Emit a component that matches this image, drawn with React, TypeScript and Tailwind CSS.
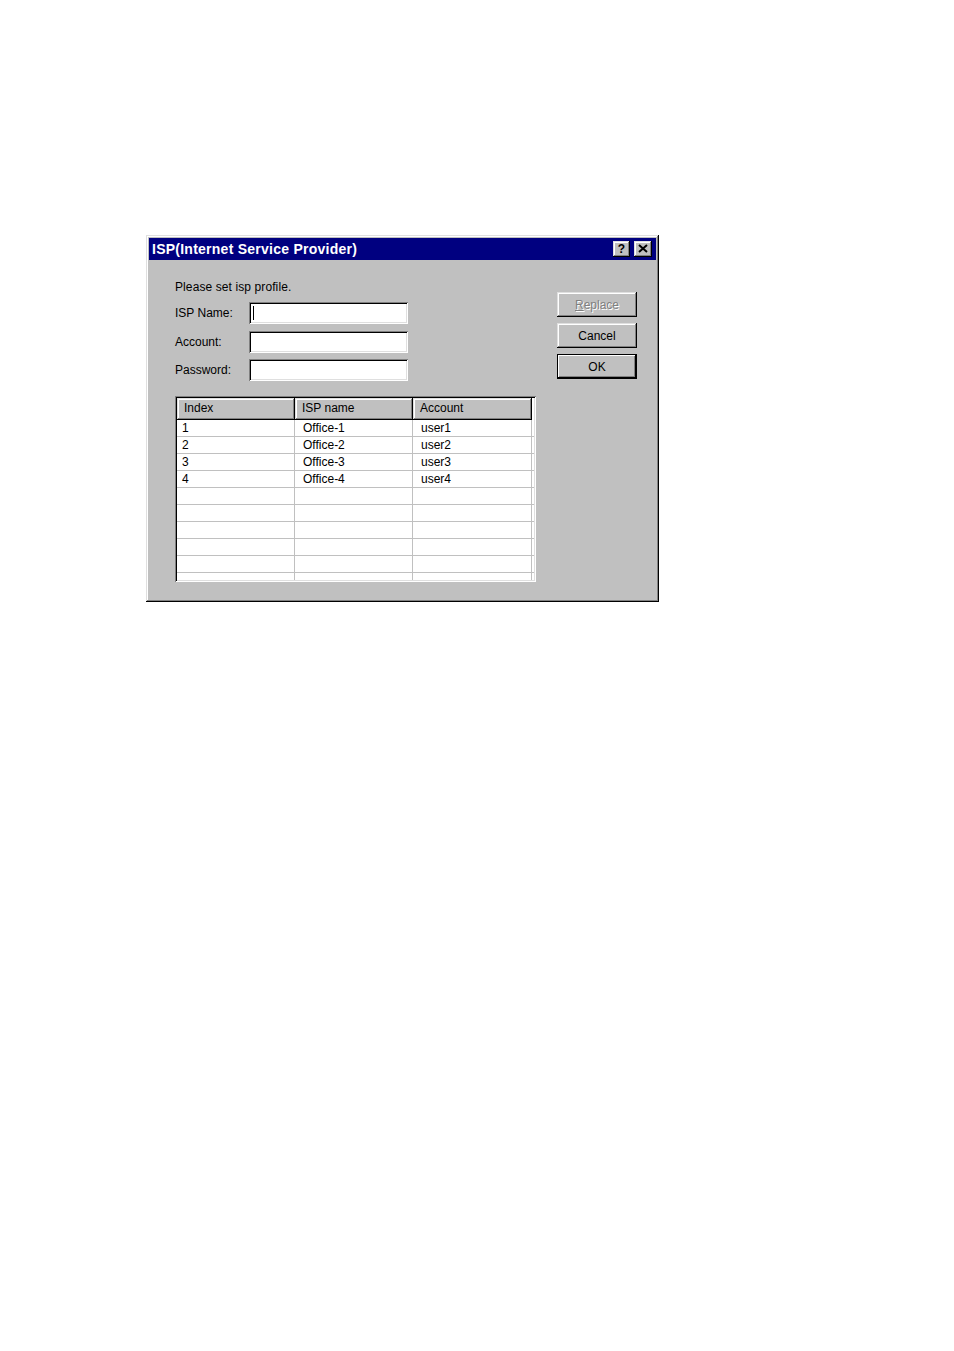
import React from "react";

const raised =
  "shadow-[inset_-1px_-1px_#000000,inset_1px_1px_#dfdfdf,inset_-2px_-2px_#808080,inset_2px_2px_#ffffff]";
const sunken =
  "shadow-[inset_1px_1px_#808080,inset_-1px_-1px_#ffffff,inset_2px_2px_#000000,inset_-2px_-2px_#dfdfdf]";

const rows = [
  ["1", "Office-1", "user1"],
  ["2", "Office-2", "user2"],
  ["3", "Office-3", "user3"],
  ["4", "Office-4", "user4"],
  ["", "", ""],
  ["", "", ""],
  ["", "", ""],
  ["", "", ""],
  ["", "", ""],
  ["", "", ""],
];

function Field({ label, cursor }: { label: string; cursor?: boolean }) {
  return (
    <div className="flex items-center h-[22px]">
      <div className="w-[74px] text-[12px] leading-[14px] text-black">{label}</div>
      <div className={`w-[159px] h-[22px] bg-white ${sunken} flex items-center pl-[4px]`}>
        {cursor && <div className="w-px h-[14px] bg-black" />}
      </div>
    </div>
  );
}

function Btn({ children, def, disabled }: { children: React.ReactNode; def?: boolean; disabled?: boolean }) {
  if (def) {
    return (
      <div className="w-[80px] h-[25px] border border-black">
        <div className="w-full h-full bg-[#c0c0c0] flex items-center justify-center text-[12px] leading-[14px] text-black shadow-[inset_-1px_-1px_#000000,inset_1px_1px_#ffffff,inset_-2px_-2px_#808080]">
          {children}
        </div>
      </div>
    );
  }
  return (
    <div
      className={`w-[80px] h-[25px] bg-[#c0c0c0] ${raised} flex items-center justify-center text-[12px] leading-[14px] ${
        disabled ? "text-[#808080] [text-shadow:1px_1px_0_#ffffff]" : "text-black"
      }`}
    >
      {children}
    </div>
  );
}

export default function App() {
  return (
    <div
      className="min-h-screen bg-white pt-[235px] pl-[146px]"
      style={{ fontFamily: '"Liberation Sans", Arial, sans-serif' }}
    >
      <div className={`w-[513px] h-[367px] bg-[#c0c0c0] p-[3px] ${raised}`}>
        {/* Title bar */}
        <div className="h-[22px] bg-[#000080] flex items-center justify-between pl-[3px] pr-[4px]">
          <span className="text-white font-bold text-[14px] leading-[16px] tracking-[0.25px]">
            ISP(Internet Service Provider)
          </span>
          <div className="flex items-center gap-[4px]">
            <div className={`w-[17px] h-[16px] bg-[#c0c0c0] ${raised} flex items-center justify-center`}>
              <span className="text-black font-bold text-[12px] leading-[12px] -mt-px">?</span>
            </div>
            <div className={`w-[18px] h-[16px] bg-[#c0c0c0] ${raised} flex items-center justify-center`}>
              <svg width="10" height="9" viewBox="0 0 10 9" className="-mt-px">
                <path d="M1 1 L9 8 M9 1 L1 8" stroke="#000" strokeWidth="2" />
              </svg>
            </div>
          </div>
        </div>

        {/* Body */}
        <div className="flex pl-[26px]">
          <div className="w-[361px] flex flex-col">
            <div className="mt-[20px] h-[14px] text-[12px] leading-[14px] text-black tracking-[0.1px]">
              Please set isp profile.
            </div>
            <div className="mt-[8px]">
              <Field label="ISP Name:" cursor />
            </div>
            <div className="mt-[7px]">
              <Field label="Account:" />
            </div>
            <div className="mt-[6px]">
              <Field label="Password:" />
            </div>

            {/* List view */}
            <div className={`mt-[15px] h-[186px] w-[361px] bg-white ${sunken} p-[2px] overflow-hidden`}>
              <div className="h-full overflow-hidden">
                <div className="flex h-[22px] bg-[#c0c0c0]">
                  {["Index", "ISP name", "Account"].map((h, i) => (
                    <div
                      key={h}
                      className={`${i === 2 ? "w-[119px]" : "w-[118px]"} h-full ${raised} flex items-center pl-[7px] pb-[2px] text-[12px] leading-[14px] text-black`}
                    >
                      {h}
                    </div>
                  ))}
                  <div className="flex-1 bg-white" />
                </div>
                {rows.map((r, idx) => (
                  <div key={idx} className="flex h-[17px] border-b border-[#c0c0c0]">
                    <div className="w-[118px] border-r border-[#c0c0c0] pl-[5px] pt-[1px] text-[12px] leading-[15px] text-black">
                      {r[0]}
                    </div>
                    <div className="w-[118px] border-r border-[#c0c0c0] pl-[8px] pt-[1px] text-[12px] leading-[15px] text-black">
                      {r[1]}
                    </div>
                    <div className="w-[119px] border-r border-[#c0c0c0] pl-[8px] pt-[1px] text-[12px] leading-[15px] text-black">
                      {r[2]}
                    </div>
                    <div className="flex-1" />
                  </div>
                ))}
              </div>
            </div>
          </div>

          {/* Buttons */}
          <div className="ml-[21px] mt-[32px] flex flex-col gap-[6px]">
            <Btn disabled>
              <span>
                <span className="underline">R</span>eplace
              </span>
            </Btn>
            <Btn>Cancel</Btn>
            <Btn def>OK</Btn>
          </div>
        </div>
      </div>
    </div>
  );
}
